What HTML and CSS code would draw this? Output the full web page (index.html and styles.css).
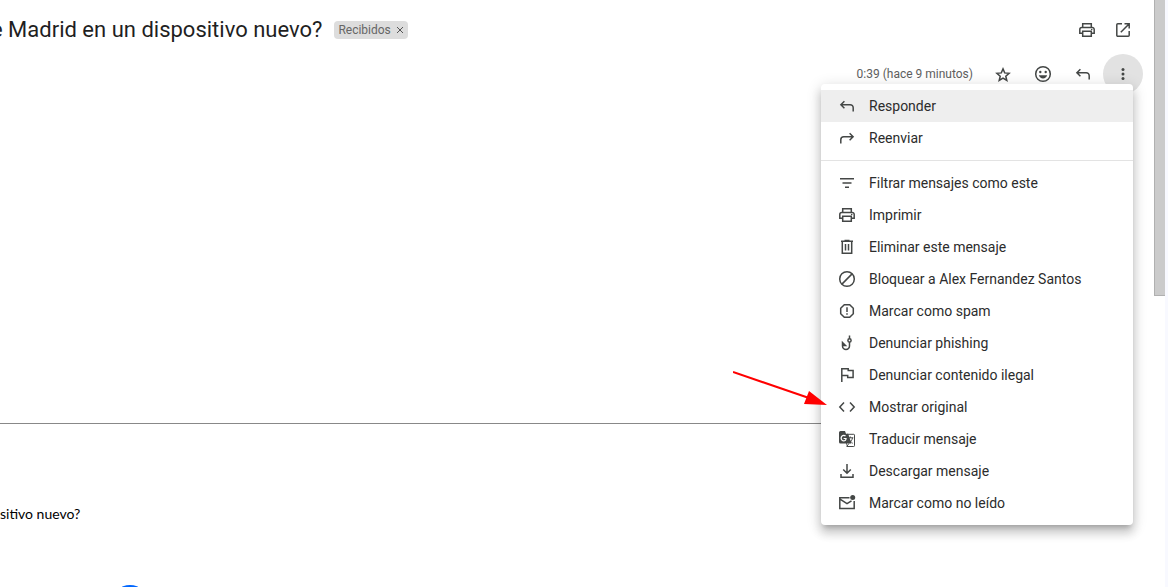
FILE: index.html
```html
<!DOCTYPE html>
<html lang="es">

<head>
  <meta charset="UTF-8">
  <meta name="viewport" content="width=device-width, initial-scale=1">
  <title>Recibidos</title>
  <link rel="stylesheet" href="styles.css">
</head>

<body>

  <main class="mail">
    <header class="subject">
      <h1 class="subject-title">e Madrid en un dispositivo nuevo?</h1>
      <span class="label">Recibidos
        <button type="button" class="label-remove" aria-label="Quitar etiqueta">
          <svg viewBox="0 0 8 8" width="8" height="8"><path d="M1 1l6 6M7 1L1 7"/></svg>
        </button>
      </span>
      <div class="subject-tools">
        <button type="button" class="tool" aria-label="Imprimir todo">
          <svg class="icon" viewBox="0 0 20 20"><path d="M5.5 13.3H2.8V9.5a2 2 0 0 1 2-2h10.4a2 2 0 0 1 2 2v3.8h-2.7M5.7 7.5V3.8h8.6v3.7M5.7 11.3h8.6v5H5.7z"/><circle class="fill" cx="14.7" cy="9.5" r=".8"/></svg>
        </button>
        <button type="button" class="tool" aria-label="En una ventana nueva">
          <svg class="icon" viewBox="0 0 20 20"><path d="M9 3.8H4.8a1 1 0 0 0-1 1v10.4a1 1 0 0 0 1 1h10.4a1 1 0 0 0 1-1V11M11.5 3.8h4.7v4.7M16 4l-8.2 8.2"/></svg>
        </button>
      </div>
    </header>

    <div class="meta">
      <time class="date">0:39 (hace 9 minutos)</time>
      <button type="button" class="action" aria-label="Destacar">
        <svg class="icon" viewBox="0 0 20 20"><path d="M10 4.9l1.7 4 4.4.4-3.3 2.9 1 4.3-3.800-2.300-3.800 2.300 1-4.300-3.300-2.900 4.400-.4z"/></svg>
      </button>
      <button type="button" class="action" aria-label="Añadir reacción">
        <svg class="icon" viewBox="0 0 20 20"><circle cx="10" cy="10" r="7.3"/><circle class="fill" cx="7.3" cy="8" r="1.2"/><circle class="fill" cx="12.7" cy="8" r="1.2"/><path class="fill" d="M5.8 11.3h8.4c-.6 1.9-2.2 3.2-4.2 3.2s-3.600-1.300-4.200-3.200z"/></svg>
      </button>
      <button type="button" class="action" aria-label="Responder">
        <svg class="icon" viewBox="0 0 20 20"><path d="M7.4 5.2L3.9 8.7l3.5 3.5M4 8.7h9.2a3 3 0 0 1 3 3v3.8"/></svg>
      </button>
      <div class="more">
        <button type="button" class="action is-open" aria-label="Más" aria-haspopup="menu" aria-expanded="true">
          <svg class="icon" viewBox="0 0 20 20"><g class="fill"><circle cx="10" cy="5.5" r="1.5"/><circle cx="10" cy="10" r="1.5"/><circle cx="10" cy="14.5" r="1.5"/></g></svg>
        </button>

        <div class="menu" role="menu">
          <button type="button" class="item is-active" role="menuitem">
            <svg class="icon" viewBox="0 0 20 20"><path d="M7.4 5.2L3.9 8.7l3.5 3.5M4 8.7h9.2a3 3 0 0 1 3 3v3.8"/></svg>
            Responder
          </button>
          <button type="button" class="item" role="menuitem">
            <svg class="icon" viewBox="0 0 20 20"><path d="M12.6 5.2l3.5 3.5-3.5 3.5M16 8.7H6.8a3 3 0 0 0-3 3v3.8"/></svg>
            Reenviar
          </button>
          <hr class="menu-line">
          <button type="button" class="item" role="menuitem">
            <svg class="icon" viewBox="0 0 20 20"><path d="M3 5.7h14M5.5 10h9M8 14.3h4"/></svg>
            Filtrar mensajes como este
          </button>
          <button type="button" class="item" role="menuitem">
            <svg class="icon" viewBox="0 0 20 20"><path d="M5.5 13.3H2.8V9.5a2 2 0 0 1 2-2h10.4a2 2 0 0 1 2 2v3.8h-2.7M5.7 7.5V3.8h8.6v3.7M5.7 11.3h8.6v5H5.7z"/><circle class="fill" cx="14.7" cy="9.5" r=".8"/></svg>
            Imprimir
          </button>
          <button type="button" class="item" role="menuitem">
            <svg class="icon" viewBox="0 0 20 20"><path d="M4 4.3h12M7.5 3.5h5M5.3 4.3v11.900h9.400V4.300M8.500 7v6.500M11.500 7v6.500"/></svg>
            Eliminar este mensaje
          </button>
          <button type="button" class="item" role="menuitem">
            <svg class="icon" viewBox="0 0 20 20"><circle cx="10" cy="10" r="7.3"/><path d="M4.9 15.1L15.1 4.9"/></svg>
            Bloquear a Alex Fernandez Santos
          </button>
          <button type="button" class="item" role="menuitem">
            <svg class="icon" viewBox="0 0 20 20"><path d="M7.3 3.7h5.4l3.6 3.6v5.4l-3.6 3.6H7.3l-3.6-3.6V7.3zM10 6.3v4.7M10 12.3v1.5"/></svg>
            Marcar como spam
          </button>
          <button type="button" class="item" role="menuitem">
            <svg class="icon" viewBox="0 0 20 20"><path d="M12.5 2.5v3.200M12.500 9v4a3.500 3.500 0 0 1-7 0V9.500l3 3H6"/><circle cx="12.5" cy="7.4" r="1.6"/></svg>
            Denunciar phishing
          </button>
          <button type="button" class="item" role="menuitem">
            <svg class="icon" viewBox="0 0 20 20"><path d="M4.8 17V3.8h6.4v1.7h4.9v6.9h-5.4v-1.9H4.8"/></svg>
            Denunciar contenido ilegal
          </button>
          <button type="button" class="item" role="menuitem">
            <svg class="icon" viewBox="0 0 20 20"><path d="M7 5.5L2.8 10 7 14.5M13 5.5l4.2 4.5-4.2 4.5"/></svg>
            Mostrar original
            <svg class="pointer" viewBox="0 0 94 38" width="94" height="38"><path class="pointer-line" d="M0 2l76 26"/><path class="pointer-head" d="M76 21L94 35l-23-1z"/></svg>
          </button>
          <button type="button" class="item" role="menuitem">
            <svg class="icon" viewBox="0 0 20 20"><path class="fill" fill-rule="evenodd" d="M3.5 2H8l1 2.800h2.200l3.200 9.700H9.800v3L8.900 14.500H3.500A1.500 1.500 0 0 1 2 13V3.500A1.500 1.500 0 0 1 3.500 2zM9.700 8.900H6.600v1.200h1.800c-.3 1.900-3.600 1.600-3.600-.9 0-2.100 2.100-2.900 3.300-1.700l.9-.9C6.700 4.500 3.500 6.200 3.500 9.200c0 4.100 6.400 4.500 6.200-.3z"/><path class="thin" d="M10 5.300h6.700a.8.8 0 0 1 .8.800v10.600a.8.8 0 0 1-.8.800H9.800l2-3M11.500 8.800h4.800M13.300 7.500v1.300M15.500 8.800c-.4 2.300-1.500 3.700-2.800 4.600M12 9.800c.8 2 2 3.200 3.700 4.500"/></svg>
            Traducir mensaje
          </button>
          <button type="button" class="item" role="menuitem">
            <svg class="icon" viewBox="0 0 20 20"><path d="M10 3v9M6.200 8.500l3.800 3.800 3.800-3.800M4 13v3.200h12V13"/></svg>
            Descargar mensaje
          </button>
          <button type="button" class="item" role="menuitem">
            <svg class="icon" viewBox="0 0 20 20"><path d="M12.500 4.800H2.800v10.700h14.400V8M3 6.200l7 4.500 4.500-2.900"/><circle class="fill" cx="15.700" cy="4.500" r="2.500"/></svg>
            Marcar como no leído
          </button>
        </div>
      </div>
    </div>

    <article class="message">
      <hr class="message-line">
      <p class="message-text">sitivo nuevo?</p>
      <span class="message-badge"></span>
    </article>
  </main>

  <div class="scroll">
    <div class="scroll-thumb"></div>
  </div>

</body>

</html>
```
FILE: styles.css
```css
html {
  height: 100%;
}

body {
  background: #FFF;
  color: #1F1F1F;
  display: flex;
  font-family: Roboto, "Liberation Sans", sans-serif;
  height: 100%;
  margin: 0;
  overflow: hidden;
}

button {
  background: none;
  border: 0;
  color: inherit;
  cursor: pointer;
  font-family: inherit;
  padding: 0;
}

.mail {
  display: flex;
  flex: 1;
  flex-direction: column;
  min-width: 0;
}

.icon {
  display: block;
  fill: none;
  flex: none;
  height: 20px;
  stroke: #444746;
  stroke-width: 1.5;
  width: 20px;
}

.icon .fill {
  fill: #444746;
  stroke: none;
}

.icon .thin {
  stroke-width: 1;
}

/* subject row */

.subject {
  align-items: center;
  display: flex;
  height: 40px;
  padding: 10px 13px 4px 0;
}

.subject-title {
  font-size: 22px;
  font-weight: 400;
  line-height: 28px;
  margin: 0 12px 0 -9px;
  white-space: nowrap;
}

.label {
  align-items: center;
  background: #DDD;
  border-radius: 4px;
  color: #666;
  display: flex;
  font-size: 12px;
  gap: 5px;
  line-height: 18px;
  padding: 0 4px;
}

.label-remove {
  height: 8px;
  line-height: 0;
}

.label-remove svg {
  fill: none;
  stroke: #555;
}

.subject-tools {
  display: flex;
  margin-left: auto;
}

.tool {
  align-items: center;
  display: flex;
  height: 36px;
  justify-content: center;
  width: 36px;
}

/* date and actions row */

.meta {
  align-items: center;
  display: flex;
  justify-content: flex-end;
  padding-right: 11px;
}

.date {
  color: #5E5E5E;
  font-size: 12px;
  margin-right: 10px;
}

.action {
  align-items: center;
  border-radius: 50%;
  display: flex;
  height: 40px;
  justify-content: center;
  width: 40px;
}

.action.is-open {
  background: #E2E2E2;
}

.more {
  position: relative;
}

/* drop-down menu */

.menu {
  background: #FFF;
  border-radius: 4px;
  box-shadow: 0 8px 10px 1px rgba(0, 0, 0, .14), 0 3px 14px 2px rgba(0, 0, 0, .12), 0 5px 5px -3px rgba(0, 0, 0, .2);
  color: #2C2C2C;
  padding: 6px 0;
  position: absolute;
  right: 10px;
  top: 30px;
  width: 312px;
}

.item {
  align-items: center;
  display: flex;
  font-size: 14px;
  gap: 12px;
  height: 32px;
  padding: 0 16px;
  position: relative;
  text-align: left;
  white-space: nowrap;
  width: 100%;
}

.item.is-active {
  background: #EEE;
}

.menu-line {
  border: 0;
  border-top: 1px solid #E3E3E3;
  margin: 6px 0;
}

.pointer {
  left: -88px;
  position: absolute;
  top: -21px;
}

.pointer-line {
  fill: none;
  stroke: #F00;
  stroke-width: 2;
}

.pointer-head {
  fill: #F00;
}

/* message */

.message {
  flex: 1;
  min-height: 0;
  overflow: hidden;
  padding-top: 329px;
}

.message-line {
  border: 0;
  border-top: 1px solid #888;
  margin: 0 40px 0 0;
}

.message-text {
  color: #000;
  font-family: Lato, sans-serif;
  font-size: 14px;
  line-height: 20px;
  margin: 80px 0 61px;
}

.message-badge {
  background: #06F;
  border-radius: 50%;
  display: block;
  height: 36px;
  margin-left: 112px;
  width: 36px;
}

/* scroll bar */

.scroll {
  border-right: 3px solid #F8F9FF;
  width: 11px;
}

.scroll-thumb {
  background: #CBCBCB;
  border: solid #B0B0B0;
  border-width: 0 0 1px 1px;
  height: 295px;
}
```
